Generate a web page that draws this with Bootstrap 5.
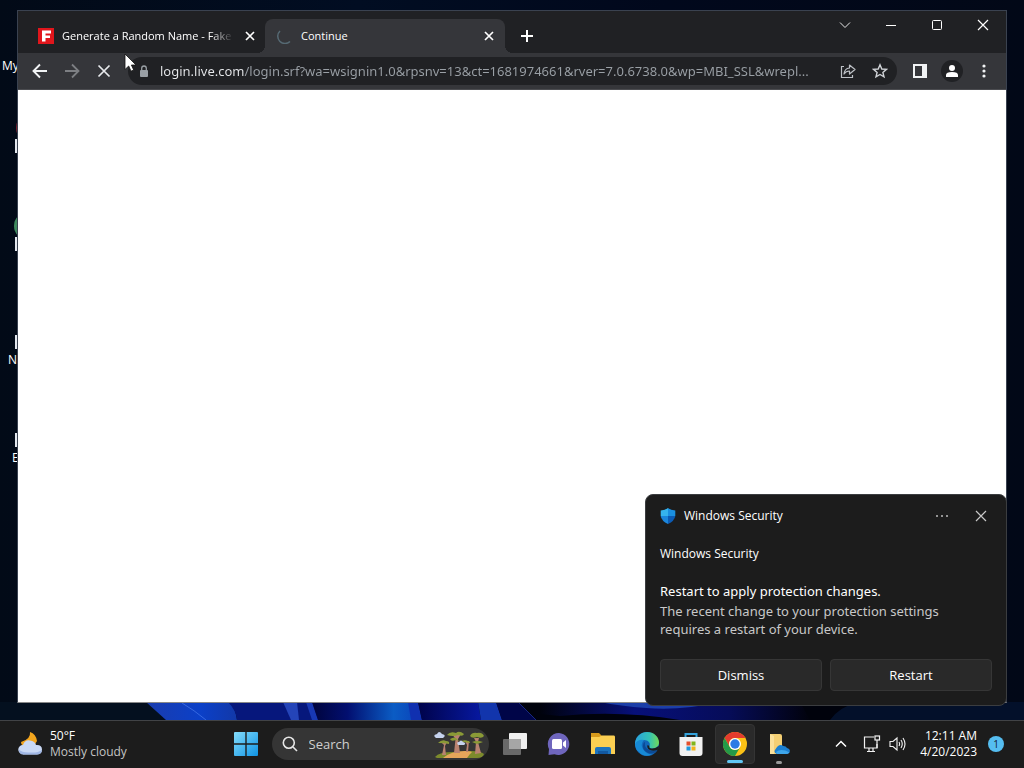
<!DOCTYPE html>
<html lang="en" data-bs-theme="dark">
<head>
<meta charset="utf-8">
<meta name="viewport" content="width=device-width, initial-scale=1">
<title>Desktop</title>
<link href="https://cdn.jsdelivr.net/npm/bootstrap@5.3.0/dist/css/bootstrap.min.css" rel="stylesheet">
<style>
body{font-family:"Open Sans","Noto Sans",sans-serif;font-size:12px;line-height:16px;color:#fff;background:#030b18}
button{background:none;border:0;padding:0;color:inherit}
svg{display:block;flex:none}
.desk{background:linear-gradient(90deg,#020a17,#010d22 35%,#01081c 65%,#020817)}
.wallpaper{bottom:0;left:0;width:100%;height:18px}
.shortcuts{top:0;left:0;width:76px}
.shortcuts li{height:98px;padding-top:41px}
.arrowbox{width:14px;height:14px;margin:0 0 3px 15px;background:#e4e8ee}
.my-label{padding:17px 0 0 2px}
.disc{left:14px;top:16px;width:28px;height:28px;border-radius:50%;background:#3f8a5e}
.disc.red{left:16px;background:#7a2030}
.win{top:10px;left:17px;right:17px;bottom:17px;background:#fff;border:1px solid #3a4250;border-bottom-color:#888}
.strip{height:42px;background:#202124;padding-left:7px}
.tabitem{width:240px;height:34px;padding:0 7px 0 13px;border-radius:8px 8px 0 0;margin-top:8px;font-size:11px}
.tabitem.on{background:#35363a;position:relative;padding:0 8px 0 12px}
.tabitem.on::before,.tabitem.on::after{content:"";position:absolute;bottom:0;width:8px;height:8px}
.tabitem.on::before{right:100%;background:radial-gradient(circle at 0 0,transparent 8px,#35363a 8px)}
.tabitem.on::after{left:100%;background:radial-gradient(circle at 100% 0,transparent 8px,#35363a 8px)}
.fade-end{-webkit-mask-image:linear-gradient(90deg,#000 calc(100% - 24px),transparent);mask-image:linear-gradient(90deg,#000 calc(100% - 24px),transparent)}
.x16{width:16px;height:16px}
.ctl{width:46px;height:28px}
.tools{height:37px;background:#35363a;padding:0 6px;border-bottom:1px solid #4b4c50}
.tb{width:32px;height:28px}
.omni{height:28px;border-radius:14px;background:#202124;margin:0 7px 0 8px;padding:0 1px 0 10px}
.omni input{font-family:"Noto Sans","Open Sans",sans-serif;font-size:13px;line-height:20px;height:24px;border:0;outline:0;padding:0;margin-left:2px;background:linear-gradient(90deg,#e8eaed 84px,#9aa0a6 84px);-webkit-background-clip:text;background-clip:text;-webkit-text-fill-color:transparent;color:#9aa0a6}
.toastbox{right:17px;bottom:14px;width:362px;background:#1c1c1c;border:1px solid #3b3d40;border-radius:8px;padding:0 14px 14px}
.toastbox header{height:42px}
.toastbox h2,.toastbox h3{font-size:12px;line-height:16px;font-weight:400;margin:0}
.toastbox h3{margin-top:9px}
.msg{font-family:"Noto Sans","Open Sans",sans-serif;font-size:13px;line-height:18px;margin:19px 0 21px;padding-right:24px;color:#c8c8c8}
.msg strong{font-weight:400;color:#fff;display:block;line-height:20px;margin-bottom:1px}
.act{height:32px;background:#292929;border:1px solid #363636;border-radius:4px;font-size:13px}
.cursor{left:124px;top:53px}
.taskbar{height:48px;background:#1c1c1c;box-shadow:inset 0 1px #414346;display:grid;grid-template-columns:1fr auto 1fr}
.app{width:44px;height:44px;position:relative}
.app.on{background:#2a2a2a;border:1px solid #343434;border-radius:4px;width:40px;height:40px;margin:0 2px}
.run::after{content:"";position:absolute;bottom:2px;left:50%;width:6px;margin-left:-3px;height:3px;border-radius:2px;background:#9a9a9a}
.app.on.run::after{width:16px;margin-left:-8px;background:#62c8f5;bottom:0}
.search{width:217px;height:32px;border-radius:16px;background:#353535;margin:0 4px;padding-left:10px;overflow:hidden}
.search input{border:0;outline:0;background:none;font-size:13px;color:#d0d0d0;padding:0;margin-left:11px}
.search input::placeholder{color:#cfcfcf;opacity:1}
.tray{padding-right:20px}
.clock{margin:0 11px 0 13px}
.note{width:16px;height:16px;border-radius:50%;background:#55bdf0;color:#123;font-size:10px}
.dim{color:#c4c4c4}
</style>
</head>
<body>
<div class="vh-100 d-flex flex-column overflow-hidden">
<main class="desk flex-grow-1 position-relative overflow-hidden">
  <svg class="wallpaper position-absolute" viewBox="0 0 1024 18" preserveAspectRatio="none" aria-hidden="true">
    <defs>
      <linearGradient id="w1"><stop offset="0" stop-color="#1a3cae"/><stop offset=".6" stop-color="#0b40c8"/><stop offset="1" stop-color="#1238a8"/></linearGradient>
      <linearGradient id="w2"><stop offset="0" stop-color="#00043c"/><stop offset=".35" stop-color="#020f70"/><stop offset=".8" stop-color="#0b5cc4"/><stop offset="1" stop-color="#0a48bc"/></linearGradient>
      <linearGradient id="w3"><stop offset="0" stop-color="#00034a"/><stop offset="1" stop-color="#0718a0"/></linearGradient>
      <linearGradient id="w4"><stop offset="0" stop-color="#00020c"/><stop offset=".35" stop-color="#07107a"/><stop offset=".7" stop-color="#060c58"/><stop offset="1" stop-color="#01020c"/></linearGradient>
    </defs>
    <path fill="#04101f" d="M0 0H160V18H0z"/><path fill="#03102a" d="M640 0H1024V18H640z"/>
    <path fill="url(#w1)" d="M146 0H230Q236 8 237 18H166z"/><path d="M182 1Q194 8 206 18" stroke="#3668e0" fill="none"/>
    <path fill="#06177c" d="M228 0H320V18H237Q236 8 228 0z"/><path fill="#2444b8" d="M283 0H297L299 18H291z"/><path fill="#1838b4" d="M306 0H312L318 18H312z"/>
    <path fill="url(#w2)" d="M312 0H410L414 18H318z"/><path fill="#1030b0" d="M408 0H418L422 18H411z"/>
    <path fill="url(#w3)" d="M418 0H478L481 18H422z"/><path fill="#1235ac" d="M478 0H496L502 18H481z"/>
    <path fill="#000548" d="M496 0H520L536 18H502z"/><path fill="#00020c" d="M518 0H860Q840 4 830 18H536z"/>
    <path d="M518 0L536 18" stroke="#182880"/>
    <path fill="url(#w4)" d="M540 0H800L810 18H680Q620 8 560 14L540 12z"/><path fill="#1c3ea8" d="M600 0H720Q680 9 646 6Q620 4 600 0z"/>
  </svg>

  <ul class="shortcuts position-absolute list-unstyled m-0" aria-label="Desktop icons">
    <li><div class="my-label">My</div></li>
    <li class="position-relative"><i class="disc red position-absolute"></i><div class="arrowbox position-relative"></div></li>
    <li class="position-relative"><i class="disc position-absolute"></i><div class="arrowbox position-relative"></div></li>
    <li><div class="arrowbox"></div><span class="ps-2">N</span></li>
    <li><div class="arrowbox"></div><span class="ms-2 ps-1">Ed</span></li>
  </ul>

  <section class="win position-absolute d-flex flex-column" aria-label="Browser window">
    <div class="strip d-flex">
      <div class="tabitem d-flex align-items-center gap-2">
        <svg width="16" height="16"><path fill="#e0161c" d="M0 0H16V16H0z"/><path fill="#fff" d="M4 2.500H13V5.500H7.500V7.500H12V10H7.500V13.500H4z"/></svg>
        <span class="flex-grow-1 text-nowrap overflow-hidden fade-end">Generate a Random Name - Fake</span>
        <button class="x16" aria-label="Close tab"><svg width="16" height="16"><path d="M4 4L12 12M12 4L4 12" stroke="#fff" stroke-width="1.700"/></svg></button>
      </div>
      <div class="tabitem on d-flex align-items-center gap-2">
        <svg width="16" height="16" fill="none"><path d="M3 3A7 7 0 0 0 13 13.500" stroke="#566a74" stroke-width="1.500"/></svg>
        <span class="flex-grow-1">Continue</span>
        <button class="x16" aria-label="Close tab"><svg width="16" height="16"><path d="M4 4L12 12M12 4L4 12" stroke="#fff" stroke-width="1.700"/></svg></button>
      </div>
      <button class="ms-2 mt-2" aria-label="New tab"><svg class="mx-2" width="12" height="12"><path d="M6 0V12M0 6H12" stroke="#fff" stroke-width="2"/></svg></button>
      <div class="ms-auto d-flex">
        <button class="ctl d-flex align-items-center justify-content-center" aria-label="Search tabs"><svg width="12" height="12" fill="none"><path d="M1 3.500L6 8.500L11 3.500" stroke="#e8e8e8"/></svg></button>
        <button class="ctl d-flex align-items-center justify-content-center" aria-label="Minimize"><svg width="12" height="12"><path d="M1 6.500H11" stroke="#fff"/></svg></button>
        <button class="ctl d-flex align-items-center justify-content-center" aria-label="Maximize"><svg width="12" height="12" fill="none"><rect x="1.500" y="1.500" width="9" height="9" rx="1" stroke="#fff"/></svg></button>
        <button class="ctl d-flex align-items-center justify-content-center" aria-label="Close"><svg width="12" height="12"><path d="M1 1L11 11M11 1L1 11" stroke="#fff" stroke-width="1.200"/></svg></button>
      </div>
    </div>
    <div class="tools d-flex align-items-center">
      <button class="tb d-flex align-items-center justify-content-center" aria-label="Back"><svg width="16" height="16" fill="none" stroke="#f1f3f4" stroke-width="1.900"><path d="M15 8H2M8 1.500L1.500 8L8 14.500"/></svg></button>
      <button class="tb d-flex align-items-center justify-content-center" aria-label="Forward"><svg width="16" height="16" fill="none" stroke="#7d7f83" stroke-width="1.800"><path d="M1 8H14M8 1.500L14.500 8L8 14.500"/></svg></button>
      <button class="tb d-flex align-items-center justify-content-center" aria-label="Stop loading"><svg width="16" height="16" stroke="#e8eaed" stroke-width="1.700"><path d="M2.500 2.500L13.500 13.500M13.500 2.500L2.500 13.500"/></svg></button>
      <div class="omni flex-grow-1 d-flex align-items-center">
        <svg width="12" height="12" class="me-2"><rect x="2" y="5" width="8" height="7" rx="1" fill="#9aa0a6"/><path d="M3.700 5V3.300a2.300 2.300 0 0 1 4.600 0V5" fill="none" stroke="#9aa0a6" stroke-width="1.300"/></svg>
        <input class="flex-grow-1" style="min-width:0" type="text" aria-label="Address" value="login.live.com/login.srf?wa=wsignin1.0&amp;rpsnv=13&amp;ct=1681974661&amp;rver=7.0.6738.0&amp;wp=MBI_SSL&amp;wrepl...">
        <button class="tb d-flex align-items-center justify-content-center" aria-label="Share"><svg width="16" height="16" fill="none" stroke="#bdc1c6" stroke-width="1.200"><path d="M4 3.500H1.500V14.500H12.500V12"/><path d="M9.500 5V2L15 6.500L9.500 11V8Q6 8 4 11Q4.500 5.500 9.500 5z" stroke-linejoin="round"/></svg></button>
        <button class="tb d-flex align-items-center justify-content-center" aria-label="Bookmark"><svg width="16" height="16" fill="none" stroke="#d0d3d7" stroke-width="1.400"><path d="M8 1.800L9.800 6L14.400 6.400L10.900 9.400L12 13.900L8 11.500L4 13.900L5.100 9.400L1.600 6.400L6.200 6z"/></svg></button>
      </div>
      <button class="tb d-flex align-items-center justify-content-center" aria-label="Side panel"><svg width="14" height="14"><path fill="#f1f3f4" fill-rule="evenodd" d="M0 0H14V14H0zM2 2V12H9V2z"/></svg></button>
      <button class="tb d-flex align-items-center justify-content-center" aria-label="Profile"><svg width="22" height="22"><circle cx="11" cy="11" r="11" fill="#202124"/><circle cx="11" cy="8" r="3" fill="#fff"/><path fill="#fff" d="M5 17V15Q5 12 11 12T17 15V17z"/></svg></button>
      <button class="tb d-flex align-items-center justify-content-center" aria-label="Menu"><svg width="4" height="14" fill="#f1f3f4"><circle cx="2" cy="2" r="1.600"/><circle cx="2" cy="7" r="1.600"/><circle cx="2" cy="12" r="1.600"/></svg></button>
    </div>
  </section>

  <section class="toastbox position-absolute" role="alert">
    <header class="d-flex align-items-center">
      <svg class="me-2" width="16" height="16"><path fill="#35b4ee" d="M8 0Q5 2.200 .700 2.500V8H8z"/><path fill="#1a8fe0" d="M8 0Q11 2.200 15.300 2.500V8H8z"/><path fill="#1b86dc" d="M.700 8H8V16Q1.500 13 .700 8z"/><path fill="#0c5bb4" d="M15.300 8H8V16Q14.500 13 15.300 8z"/></svg>
      <h2>Windows Security</h2>
      <button class="ms-auto me-4" aria-label="More options"><svg width="16" height="16" fill="#bbb"><circle cx="3" cy="8" r="1"/><circle cx="8" cy="8" r="1"/><circle cx="13" cy="8" r="1"/></svg></button>
      <button class="me-1" aria-label="Close notification"><svg width="14" height="14"><path d="M2 2L12 12M12 2L2 12" stroke="#c8c8c8" stroke-width="1.200"/></svg></button>
    </header>
    <h3>Windows Security</h3>
    <p class="msg"><strong>Restart to apply protection changes.</strong>The recent change to your protection settings requires a restart of your device.</p>
    <div class="d-flex gap-2">
      <button class="act flex-fill w-50">Dismiss</button>
      <button class="act flex-fill w-50">Restart</button>
    </div>
  </section>

  <svg class="cursor position-absolute" width="13" height="19"><path d="M1 1V16.500L4.700 13L7 18.200L9.700 17L7.400 12H12z" fill="#fff" stroke="#111" stroke-width=".8"/></svg>
</main>

<footer class="taskbar align-items-center">
  <button class="d-flex align-items-center text-start ps-3" aria-label="Weather">
    <svg class="me-2" width="26" height="26"><path fill="#f2a51e" d="M14 1Q15 8 5 11Q5 15 10 15H18L21 10Q20 3 14 1z"/><path fill="#c9d8f4" d="M6.500 23A4.500 4.500 0 0 1 7 14Q9 8.500 14 9.500Q19 10 20 14Q26 13.500 26 18.500Q26 23 21 23.500H7z"/><path fill="#9fb6e4" d="M3 18.500Q3 23.500 7 23.500H21Q25.500 23.500 26 19Q22 22 14 21.500Q6 22 3 18.500z"/></svg>
    <span><span class="d-block">50°F</span><span class="d-block dim">Mostly cloudy</span></span>
  </button>
  <nav class="d-flex align-items-center" aria-label="Taskbar">
    <button class="app d-flex align-items-center justify-content-center" aria-label="Start"><svg width="24" height="24"><defs><linearGradient id="st" gradientUnits="userSpaceOnUse" x1="0" y1="0" x2="24" y2="24"><stop stop-color="#84dcfb"/><stop offset="1" stop-color="#0f93e4"/></linearGradient></defs><path fill="url(#st)" d="M1 0H11.300V11.300H0V1Q0 0 1 0zM12.700 0H23Q24 0 24 1V11.300H12.700zM0 12.700H11.300V24H1Q0 24 0 23zM12.700 12.700H24V23Q24 24 23 24H12.700z"/></svg></button>
    <div class="search d-flex align-items-center">
      <svg width="16" height="16" fill="none" stroke="#e6e6e6" stroke-width="1.600"><circle cx="6.800" cy="6.800" r="5.500"/><path d="M11 11L15 15"/></svg>
      <input class="flex-grow-1" style="min-width:0" type="search" placeholder="Search" aria-label="Search">
      <svg width="52" height="28" class="me-1"><path fill="#7c8a2c" d="M2 27Q6 22 20 22L38 21Q48 21 51 24Q50 28 44 28H4z"/><path fill="#e6a65a" d="M10 28Q18 21 32 21Q42 21 37 24L34 28z"/><path fill="#b98270" d="M21 23L22.500 9L19 4H24L28 4L25 9L27 23zM42 24L43 12L41 8H46L45 12L48 23zM9 25L11 15L8 12H14L12 16L13 25zM33 22L34 15L32 11H36L35 22z"/><path fill="#8a9a36" d="M14 5Q17 1 23 3Q26 0 31 4Q30 7 25 5Q20 7 14 5zM37 6Q39 2 44 3Q49 2 51 6Q49 9 44 7Q39 9 37 6zM5 13Q9 9 13 11Q17 11 16 14Q12 13 5 13zM27 12Q31 9 35 11Q37 11 37 13Q32 12 27 12zM17 9Q22 6 24 9T31 9Q28 12 23 10Q18 12 17 9zM39 12Q44 10 50 12L44 14z"/><path fill="#c6d3ee" d="M3 8Q-1 5 4 4Q6 0 9 4Q14 5 10 8zM25 15Q23 12 26 12Q28 9 30 12Q34 13 31 15z"/></svg>
    </div>
    <button class="app d-flex align-items-center justify-content-center" aria-label="Task view"><svg width="24" height="24"><rect x="6" y="1" width="18" height="16" rx="1" fill="#f0f0f0"/><rect x="0" y="7" width="18" height="16" rx="1" fill="#777" fill-opacity=".85"/><path fill="#a6a6a6" d="M6 7H18V17H6z"/></svg></button>
    <button class="app d-flex align-items-center justify-content-center" aria-label="Chat"><svg width="24" height="24"><path fill="#6f66bd" d="M12 1A11 11 0 1 1 7.500 22.300L1.500 23L2 17A11 11 0 0 1 12 1z"/><rect x="5" y="7" width="10" height="10" rx="1.500" fill="#fff"/><path fill="#fff" d="M16 10.500L19 8V16L16 13.500z"/></svg></button>
    <button class="app d-flex align-items-center justify-content-center" aria-label="File Explorer"><svg width="24" height="24"><path fill="#d79a1c" d="M0 1H8L11 4V8H0z"/><path fill="#fbcf52" d="M0 5H8L11 3.500H23Q24 3.500 24 5V22H0z"/><path fill="#1c73bd" d="M4 22V17Q4 15 6 15H18Q20 15 20 17V22z"/><path fill="#1258a0" d="M7 19H17V22H7z"/></svg></button>
    <button class="app d-flex align-items-center justify-content-center" aria-label="Edge"><svg width="24" height="24"><defs><linearGradient id="eg"><stop stop-color="#2aa2de"/><stop offset=".6" stop-color="#33c2b5"/><stop offset="1" stop-color="#72d957"/></linearGradient></defs><circle cx="12" cy="12" r="12" fill="#1266b8"/><path fill="url(#eg)" d="M0 11C1 4 6 0 12 0C19 0 24 5 24 10.500C24 14 21 16.500 17.500 16.500C14.500 16.500 13.500 15.500 14.500 14C16 11 13 8 9 8C5 8 1 10 0 14z"/><path fill="#1789d5" d="M0 12Q3 7 9 8Q5 12 8 17Q11 22 17 22.500Q9 26 4 20Q0 17 0 12z"/><path fill="#0c4a94" d="M8.500 11Q6 18 13 21Q19 23 22.500 18Q18 20 14 18Q9 16 10 10z"/><path fill="#1c1c1c" d="M14.500 14Q13.500 15.500 16 16.500Q20 17 23 14.500L24 14Q24 17 22.500 18Q18 19.500 15 18Q11.500 16.500 12.500 13z"/></svg></button>
    <button class="app d-flex align-items-center justify-content-center" aria-label="Microsoft Store"><svg width="24" height="24"><path d="M6.500 6V2H17.500V6" fill="none" stroke="#35a3dc" stroke-width="2"/><path fill="#f2f2f2" d="M.500 5H23.500V21Q23.500 24 20.500 24H3.500Q.500 24 .500 21z"/><path fill="#e3502c" d="M7.500 9.500H11.500V13.500H7.500z"/><path fill="#80b51c" d="M12.500 9.500H16.500V13.500H12.500z"/><path fill="#1e98dc" d="M7.500 14.500H11.500V18.500H7.500z"/><path fill="#f0b41c" d="M12.500 14.500H16.500V18.500H12.500z"/></svg></button>
    <button class="app on run d-flex align-items-center justify-content-center" aria-label="Chrome"><svg width="24" height="24"><circle cx="12" cy="12" r="12" fill="#fbc116"/><path fill="#e33b2e" d="M1.600 6A12 12 0 0 1 22.400 6H12A6 6 0 0 0 6.800 15z"/><path fill="#249a48" d="M1.600 6A12 12 0 0 0 12 24L17.200 15A6 6 0 0 1 6.800 15z"/><circle cx="12" cy="12" r="6" fill="#fff"/><circle cx="12" cy="12" r="4.700" fill="#2d7be5"/></svg></button>
    <button class="app run d-flex align-items-center justify-content-center" aria-label="Folder"><svg width="24" height="24"><path fill="#f4cf73" d="M3 2H13Q15 2 15 4V22H3z"/><path fill="#fbe09a" d="M3 2L7 4V22H3z"/><path fill="#1b7fd0" d="M10 22Q5.500 20 9 16.500Q12 11 16.500 14Q19 14 20 16Q24 17 22.500 20.500Q21 22 19 22z"/><path fill="#3fa6ea" d="M9 20Q14 16 22.500 20.500Q21 22 19 22H10z"/></svg></button>
  </nav>
  <div class="tray d-flex align-items-center justify-content-end">
    <button class="me-3" aria-label="Hidden icons"><svg width="12" height="12" fill="none"><path d="M1 8.500L6 3.500L11 8.500" stroke="#fff" stroke-width="1.500"/></svg></button>
    <button class="me-2" aria-label="Network"><svg width="18" height="18" fill="none" stroke="#f2f2f2" stroke-width="1.200"><path d="M11 2H1.500V13H14V9M4 16.500H12M6 13V16.500M10 13V16.500"/><rect x="12" y="1" width="4.500" height="4"/><path d="M14 5V13"/></svg></button>
    <button aria-label="Volume"><svg width="18" height="16" fill="none" stroke="#f2f2f2" stroke-width="1.100"><path d="M1 5.500H4L8 2V14L4 10.500H1z"/><path d="M10 6Q11.200 8 10 10M12 4Q14.500 8 12 12M14 2Q18 8 14 14"/></svg></button>
    <div class="clock text-end"><div>12:11 AM</div><div>4/20/2023</div></div>
    <button class="note d-flex align-items-center justify-content-center" aria-label="1 new notification">1</button>
  </div>
</footer>
</div>
<script src="https://cdn.jsdelivr.net/npm/bootstrap@5.3.0/dist/js/bootstrap.bundle.min.js"></script>
</body>
</html>
